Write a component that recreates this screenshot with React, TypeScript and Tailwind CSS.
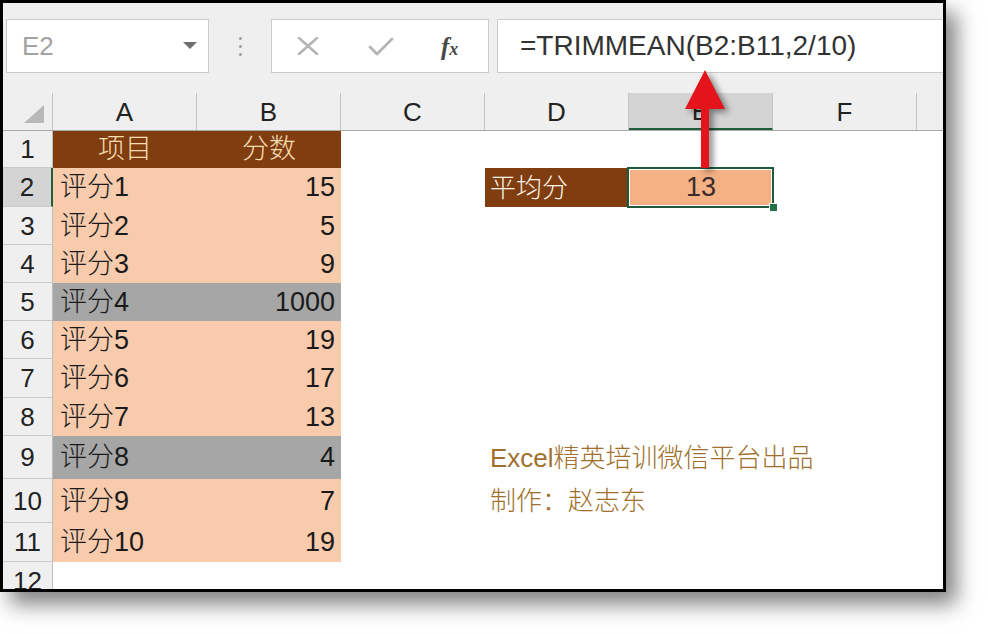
import React from "react";

type Row = {
  n: string;
  h: string;
  a?: string;
  b?: string;
  fill?: "head" | "peach" | "grey";
  note?: string;
};

const ROWS: Row[] = [
  { n: "1", h: "h-[37px]", a: "项目", b: "分数", fill: "head" },
  { n: "2", h: "h-[39px]", a: "评分1", b: "15", fill: "peach" },
  { n: "3", h: "h-[38px]", a: "评分2", b: "5", fill: "peach" },
  { n: "4", h: "h-[38px]", a: "评分3", b: "9", fill: "peach" },
  { n: "5", h: "h-[38px]", a: "评分4", b: "1000", fill: "grey" },
  { n: "6", h: "h-[38px]", a: "评分5", b: "19", fill: "peach" },
  { n: "7", h: "h-[39px]", a: "评分6", b: "17", fill: "peach" },
  { n: "8", h: "h-[38px]", a: "评分7", b: "13", fill: "peach" },
  { n: "9", h: "h-[43px]", a: "评分8", b: "4", fill: "grey", note: "Excel精英培训微信平台出品" },
  { n: "10", h: "h-[44px]", a: "评分9", b: "7", fill: "peach", note: "制作：赵志东" },
  { n: "11", h: "h-[39px]", a: "评分10", b: "19", fill: "peach" },
  { n: "12", h: "h-[38px]" },
];

const COLS = ["A", "B", "C", "D", "E", "F"];

const fillClass = {
  head: "bg-[#7f3d10] text-[#f6deb0]",
  peach: "bg-[#f8cbad] text-[#1a1a1a]",
  grey: "bg-[#a6a6a6] text-[#1a1a1a]",
};

function NameBox() {
  return (
    <div className="ml-[3px] w-[203px] h-[54px] bg-white border border-[#cacaca] flex items-center justify-between pl-[15px] pr-[11px]">
      <span className="text-[26px] text-[#a3a3a3] leading-none">E2</span>
      <svg width="14" height="8" viewBox="0 0 14 8">
        <polygon points="0,0 14,0 7,7" fill="#6f6f6f" />
      </svg>
    </div>
  );
}

function FormulaButtons() {
  return (
    <div className="w-[218px] h-[54px] bg-white border border-[#cacaca] flex items-center pl-[25px]">
      <svg width="22" height="18" viewBox="0 0 22 18">
        <path d="M2 1 L20 17 M20 1 L2 17" stroke="#b5b5b5" strokeWidth="2.6" strokeLinecap="round" />
      </svg>
      <svg width="26" height="19" viewBox="0 0 26 19" className="ml-[49px]">
        <path d="M2 10 L9 17 L24 2" fill="none" stroke="#b5b5b5" strokeWidth="2.8" strokeLinecap="round" strokeLinejoin="round" />
      </svg>
      <span className="ml-[47px] font-['Liberation_Serif',serif] italic font-bold text-[#474747] text-[25px] leading-none">
        f<span className="text-[18px]">x</span>
      </span>
    </div>
  );
}

function Toolbar() {
  return (
    <div className="h-[90px] flex items-start pt-[16px]">
      <NameBox />
      <div className="w-[62px] h-[54px] flex flex-col items-center justify-center gap-[5px]">
        <span className="w-[3px] h-[3px] rounded-full bg-[#9c9c9c]" />
        <span className="w-[3px] h-[3px] rounded-full bg-[#9c9c9c]" />
        <span className="w-[3px] h-[3px] rounded-full bg-[#9c9c9c]" />
      </div>
      <FormulaButtons />
      <div className="ml-[8px] flex-1 h-[54px] bg-white border border-[#cacaca] border-r-0 flex items-center pl-[22px]">
        <span className="text-[28px] text-[#333] leading-none">=TRIMMEAN(B2:B11,2/10)</span>
      </div>
    </div>
  );
}

function HeaderRow() {
  return (
    <div className="h-[38px] flex border-b border-[#a9a9a9] bg-[#efefef]">
      <div className="w-[50px] shrink-0 border-r border-[#c4c4c4] flex items-end justify-end pr-[8px] pb-[7px]">
        <svg width="20" height="18" viewBox="0 0 20 18">
          <polygon points="20,0 20,18 0,18" fill="#b8b8b8" />
        </svg>
      </div>
      {COLS.map((c) => (
        <div
          key={c}
          className={`w-[144px] shrink-0 border-r border-[#c4c4c4] flex items-center justify-center text-[26px] leading-none text-[#222] ${
            c === "E" ? "bg-[#d4d4d4] border-b-2 border-b-[#1f5f3c]" : ""
          }`}
        >
          {c}
        </div>
      ))}
      <div className="flex-1" />
    </div>
  );
}

function DataRow({ row }: { row: Row }) {
  const selected = row.n === "2";
  return (
    <div className={`flex bg-white ${row.h}`}>
      <div
        className={`w-[50px] shrink-0 border-b border-[#c8c8c8] flex items-center justify-center text-[26px] leading-none text-[#222] ${
          selected ? "bg-[#d4d4d4] border-r-2 border-r-[#1f5f3c]" : "bg-[#efefef] border-r border-r-[#bdbdbd]"
        }`}
      >
        {row.n}
      </div>
      <div
        className={`w-[144px] shrink-0 flex items-center text-[27px] leading-none whitespace-nowrap ${
          row.fill ? fillClass[row.fill] : ""
        } ${row.fill === "head" ? "justify-center" : "pl-[7px]"}`}
      >
        {row.a}
      </div>
      <div
        className={`w-[144px] shrink-0 flex items-center text-[27px] leading-none ${
          row.fill ? fillClass[row.fill] : ""
        } ${row.fill === "head" ? "justify-center" : "justify-end pr-[6px]"}`}
      >
        {row.b}
      </div>
      <div className="w-[144px] shrink-0" />
      {selected ? (
        <>
          <div className="w-[144px] shrink-0 bg-[#7f3d10] text-[#fdf4e6] flex items-center pl-[5px] text-[26px] leading-none">
            平均分
          </div>
          <div className="w-[144px] shrink-0 relative bg-[#f4b183] text-[#3b2b2b] flex items-center justify-center text-[27px] leading-none">
            13
            <div className="absolute -left-[2px] -top-[1px] -right-[1px] -bottom-[1px] border-2 border-[#1e5b3b]">
              <div className="w-full h-full border border-white" />
            </div>
            <div className="absolute -right-[5px] -bottom-[5px] w-[9px] h-[9px] bg-[#217346] border border-white" />
          </div>
        </>
      ) : (
        <>
          <div className="w-[144px] shrink-0 flex items-center pl-[5px] text-[26px] leading-none text-[#a0702c] whitespace-nowrap">
            {row.note}
          </div>
          <div className="w-[144px] shrink-0" />
        </>
      )}
      <div className="w-[144px] shrink-0" />
      <div className="flex-1" />
    </div>
  );
}

export default function App() {
  return (
    <div className="relative w-[988px] h-[634px] bg-white font-light font-['Liberation_Sans','Noto_Sans_CJK_SC',sans-serif]">
      <div className="w-[946px] h-[592px] border-[3px] border-black bg-[#efefef] overflow-hidden shadow-[10px_12px_20px_rgba(0,0,0,0.5)]">
        <Toolbar />
        <HeaderRow />
        {ROWS.map((r) => (
          <DataRow key={r.n} row={r} />
        ))}
      </div>
      <svg
        className="absolute left-[680px] top-[64px] drop-shadow-[4px_3px_3px_rgba(0,0,0,0.45)]"
        width="52"
        height="106"
        viewBox="0 0 52 106"
      >
        <polygon points="25,6 45,45 29,45 29,104 21,104 21,45 5,45" fill="#e3141c" />
      </svg>
    </div>
  );
}
